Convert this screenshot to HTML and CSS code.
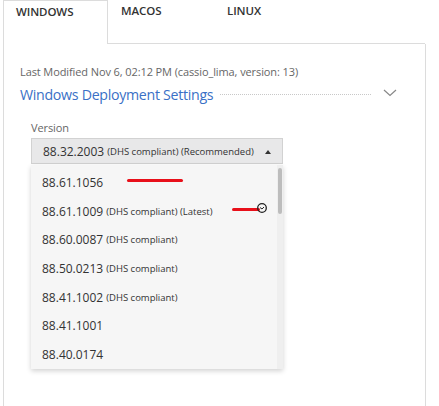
FILE: index.html
```html
<!DOCTYPE html>
<html>
<head>
<meta charset="utf-8">
<link rel="stylesheet" href="styles.css">
</head>
<body>
<div class="tabs">
  <div class="tab active">WINDOWS</div>
  <div class="tab">MACOS</div>
  <div class="tab">LINUX</div>
  <div class="tab-fill"></div>
</div>
<div class="panel">
  <div class="meta">Last Modified Nov 6, 02:12 PM (cassio_lima, version: 13)</div>
  <div class="section">
    <span class="section-title">Windows Deployment Settings</span>
    <span class="dots"></span>
    <svg class="chev" width="14" height="8" viewBox="0 0 14 8"><path d="M1 1 L7 6.5 L13 1" fill="none" stroke="#888" stroke-width="1.2"/></svg>
  </div>
  <div class="field">
    <div class="label">Version</div>
    <div class="select-wrap">
      <div class="select">
        <span class="v">88.32.2003</span><span class="s">(DHS compliant) (Recommended)</span>
        <span class="caret"></span>
      </div>
      <div class="menu">
        <div class="item"><span class="v">88.61.1056</span></div>
        <div class="item"><span class="v">88.61.1009</span><span class="s">(DHS compliant) (Latest)</span></div>
        <div class="item"><span class="v">88.60.0087</span><span class="s">(DHS compliant)</span></div>
        <div class="item"><span class="v">88.50.0213</span><span class="s">(DHS compliant)</span></div>
        <div class="item"><span class="v">88.41.1002</span><span class="s">(DHS compliant)</span></div>
        <div class="item"><span class="v">88.41.1001</span></div>
        <div class="item"><span class="v">88.40.0174</span></div>
        <div class="scroll"><div class="thumb"></div></div>
        <div class="mark mark1"></div>
        <div class="mark mark2"></div>
        <svg class="cursor" width="12" height="12" viewBox="0 0 12 12"><circle cx="6" cy="6" r="4.3" fill="none" stroke="#222" stroke-width="1.3"/><path d="M4 5.5 L6 7 L8 5" fill="none" stroke="#222" stroke-width="1"/></svg>
      </div>
    </div>
  </div>
</div>
</body>
</html>
```
FILE: styles.css
```css
html, body {
  margin: 0;
  padding: 0;
  background: #fff;
  font-family: "Open Sans", "Noto Sans", sans-serif;
  color: #333;
}
.tabs {
  display: flex;
  padding-left: 3px;
  height: 44px;
}
.tab {
  width: 106px;
  box-sizing: border-box;
  padding: 3px 0 0 13px;
  font-size: 11.5px;
  font-weight: 600;
  color: #333;
  border-bottom: 1px solid #dcdcdc;
  letter-spacing: -0.1px;
}
.tab.active {
  width: 105px;
  padding-left: 12px;
  border: 1px solid #dcdcdc;
  border-bottom: none;
}
.tab-fill {
  width: 105px;
  border-bottom: 1px solid #dcdcdc;
}
.panel {
  margin-left: 3px;
  width: 423px;
  box-sizing: border-box;
  border-left: 1px solid #dcdcdc;
  border-right: 1px solid #dcdcdc;
  height: 362px;
  padding: 20px 0 0 16px;
}
.meta {
  font-size: 11px;
  letter-spacing: -0.1px;
  color: #666;
  line-height: 15px;
}
.section {
  display: flex;
  align-items: center;
  height: 24px;
  margin-top: 3px;
  width: 377px;
}
.section-title {
  font-size: 14.2px;
  color: #3a70c6;
  letter-spacing: -0.3px;
}
.dots {
  flex: 1;
  margin-left: 7px;
  border-top: 1px dotted #c8c8c8;
  margin-top: 1px;
}
.chev {
  margin-left: 12px;
  margin-top: -2px;
}
.field {
  margin-top: 14px;
  padding-left: 11px;
}
.label {
  font-size: 11px;
  color: #666;
  line-height: 15px;
  letter-spacing: -0.1px;
}
.select-wrap {
  position: relative;
  margin-top: 3px;
  width: 252px;
}
.select {
  height: 26px;
  box-sizing: border-box;
  background: #e8e8e9;
  border: 1px solid #d2d2d2;
  display: flex;
  align-items: center;
  padding-left: 11px;
  position: relative;
}
.v {
  font-size: 12px;
  color: #333;
}
.s {
  font-size: 9.5px;
  margin-left: 3px;
  color: #333;
}
.caret {
  position: absolute;
  right: 11px;
  top: 11px;
  width: 0;
  height: 0;
  border-left: 3.5px solid transparent;
  border-right: 3.5px solid transparent;
  border-bottom: 4px solid #333;
}
.menu {
  position: absolute;
  left: 0;
  top: 27px;
  width: 252px;
  height: 204px;
  background: #f6f6f6;
  box-shadow: 0 2px 5px rgba(0,0,0,0.18);
  padding-top: 3px;
  box-sizing: border-box;
}
.item {
  height: 28.7px;
  display: flex;
  align-items: center;
  padding-left: 11px;
}
.scroll {
  position: absolute;
  right: 0;
  top: 0;
  width: 6px;
  height: 204px;
  background: #efefef;
}
.thumb {
  position: absolute;
  left: 1px;
  top: 3px;
  width: 4px;
  height: 46px;
  border-radius: 2px;
  background: #bdbdbd;
}
.mark {
  position: absolute;
  height: 3px;
  background: #e8101a;
  border-radius: 1.5px;
}
.mark1 {
  left: 96px;
  top: 14px;
  width: 56px;
}
.mark2 {
  left: 201px;
  top: 43px;
  width: 28px;
}
.cursor {
  position: absolute;
  left: 225px;
  top: 37px;
}
```
